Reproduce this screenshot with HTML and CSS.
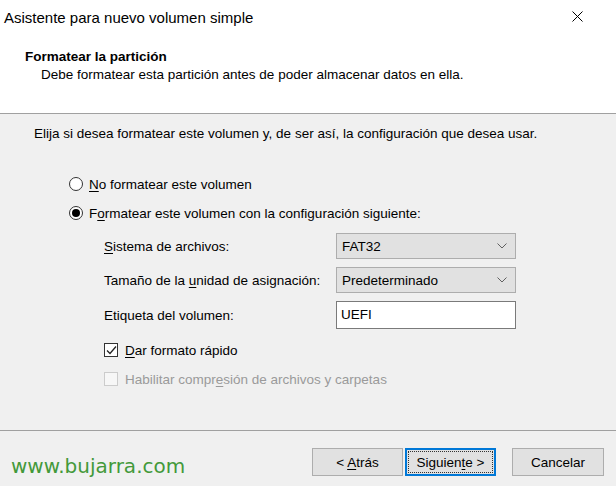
FILE: index.html
```html
<!doctype html>
<html lang="es">
    <head>
        <meta charset="UTF-8" />
        <title>Asistente para nuevo volumen simple</title>
        <link rel="stylesheet" href="styles.css">
    </head>
    <body>
        <div class="window">
            <div class="header">
                <div class="titlebar">
                    <span>Asistente para nuevo volumen simple</span>
                    <svg class="close" width="11" height="11" viewBox="0 0 11 11">
                        <path d="M0.5 0.5 L10.5 10.5 M10.5 0.5 L0.5 10.5" stroke="#000" stroke-width="1" fill="none" />
                    </svg>
                </div>
                <div class="heading">Formatear la partición</div>
                <div class="subheading">Debe formatear esta partición antes de poder almacenar datos en ella.</div>
            </div>

            <div class="content">
                <p class="intro">Elija si desea formatear este volumen y, de ser así, la configuración que desea usar.</p>

                <div class="option">
                    <span class="radio"></span>
                    <span><u>N</u>o formatear este volumen</span>
                </div>
                <div class="option second">
                    <span class="radio checked"></span>
                    <span>F<u>o</u>rmatear este volumen con la configuración siguiente:</span>
                </div>

                <div class="form">
                    <label><u>S</u>istema de archivos:</label>
                    <div class="combo">
                        <span>FAT32</span>
                        <svg width="10" height="6" viewBox="0 0 10 6">
                            <path d="M0.5 0.5 L5 5 L9.5 0.5" stroke="#606060" fill="none" />
                        </svg>
                    </div>

                    <label>Tamaño de la <u>u</u>nidad de asignación:</label>
                    <div class="combo">
                        <span>Predeterminado</span>
                        <svg width="10" height="6" viewBox="0 0 10 6">
                            <path d="M0.5 0.5 L5 5 L9.5 0.5" stroke="#606060" fill="none" />
                        </svg>
                    </div>

                    <label>Etiqueta del volumen:</label>
                    <div class="textbox">UEFI</div>
                </div>

                <div class="check">
                    <span class="box">
                        <svg width="11" height="11" viewBox="0 0 11 11">
                            <path d="M1 5.5 L4 8.5 L10 1.5" stroke="#222" stroke-width="1.3" fill="none" />
                        </svg>
                    </span>
                    <span><u>D</u>ar formato rápido</span>
                </div>
                <div class="check disabled">
                    <span class="box"></span>
                    <span>Habilitar compr<u>e</u>sión de archivos y carpetas</span>
                </div>
            </div>

            <div class="footer">
                <span class="watermark">www.bujarra.com</span>
                <button class="btn"><span>&lt; <u>A</u>trás</span></button>
                <button class="btn default"><span class="focus"><span>Siguien<u>t</u>e &gt;</span></span></button>
                <button class="btn cancel">Cancelar</button>
            </div>
        </div>
    </body>
</html>
```

FILE: styles.css
```css
body {
    margin: 0;
    font-family: "Liberation Sans", Arial, sans-serif;
    font-size: 13.5px;
    color: #000;
    background-color: #f0f0f0;
}

.window {
    width: 616px;
    height: 486px;
    display: flex;
    flex-direction: column;
    overflow: hidden;
}

u {
    text-decoration: underline;
    text-underline-offset: 2px;
}

.header {
    background-color: #fff;
    height: 113px;
    border-bottom: 1px solid #a0a0a0;
}

.titlebar {
    height: 34px;
    display: flex;
    align-items: center;
    justify-content: space-between;
    padding: 0 33px 0 4px;
    font-size: 15px;
}

.close {
    margin-top: -2px;
}

.heading {
    margin-top: 14px;
    padding-left: 25px;
    font-weight: bold;
    line-height: 18px;
}

.subheading {
    padding-left: 41px;
    line-height: 18px;
}

.content {
    flex: 1;
    padding: 11px 0 0 34px;
    border-bottom: 1px solid #a0a0a0;
}

.intro {
    margin: 0;
    line-height: 18px;
}

.option {
    display: flex;
    align-items: center;
    gap: 6px;
    height: 20px;
    margin: 31px 0 0 35px;
}

.option.second {
    margin-top: 9px;
}

.radio {
    width: 14px;
    height: 14px;
    box-sizing: border-box;
    border: 1px solid #333;
    border-radius: 50%;
    background-color: #fff;
    display: flex;
    align-items: center;
    justify-content: center;
}

.radio.checked::after {
    content: "";
    width: 8px;
    height: 8px;
    border-radius: 50%;
    background-color: #000;
}

.form {
    display: grid;
    grid-template-columns: 232px 180px;
    row-gap: 8px;
    align-items: center;
    margin: 10px 0 0 70px;
}

.combo {
    height: 26px;
    box-sizing: border-box;
    border: 1px solid #adadad;
    background-color: #e1e1e1;
    display: flex;
    align-items: center;
    justify-content: space-between;
    padding: 0 8px 0 5px;
}

.textbox {
    height: 28px;
    box-sizing: border-box;
    border: 1px solid #7a7a7a;
    background-color: #fff;
    padding: 5px 0 0 4px;
}

.check {
    display: flex;
    align-items: center;
    gap: 7px;
    height: 20px;
    margin: 11px 0 0 70px;
}

.check.disabled {
    margin-top: 9px;
    color: #9a9a9a;
}

.box {
    width: 14px;
    height: 14px;
    box-sizing: border-box;
    border: 1px solid #333;
    background-color: #fff;
    display: flex;
    align-items: center;
    justify-content: center;
}

.check.disabled .box {
    border-color: #cccccc;
    background-color: #f7f7f7;
}

.footer {
    height: 55px;
    box-sizing: border-box;
    display: flex;
    align-items: flex-start;
    padding: 17px 12px 0 11px;
}

.watermark {
    margin-right: auto;
    font-family: "DejaVu Sans", Verdana, sans-serif;
    font-size: 20px;
    line-height: 24px;
    color: #43993a;
    margin-top: 6px;
}

.btn {
    width: 91px;
    height: 28px;
    box-sizing: border-box;
    border: 1px solid #adadad;
    background-color: #e1e1e1;
    font-family: "Liberation Sans", Arial, sans-serif;
    font-size: 13.5px;
    color: #000;
    padding: 0;
    display: flex;
    align-items: center;
    justify-content: center;
}

.btn.default {
    margin-left: 2px;
    border-color: #0078d7;
    box-shadow: inset 0 0 0 1px #0078d7;
    padding: 3px;
}

.focus {
    flex: 1;
    align-self: stretch;
    display: flex;
    align-items: center;
    justify-content: center;
    outline: 1px dotted #333;
}

.btn.cancel {
    margin-left: 16px;
    width: 92px;
}
```
